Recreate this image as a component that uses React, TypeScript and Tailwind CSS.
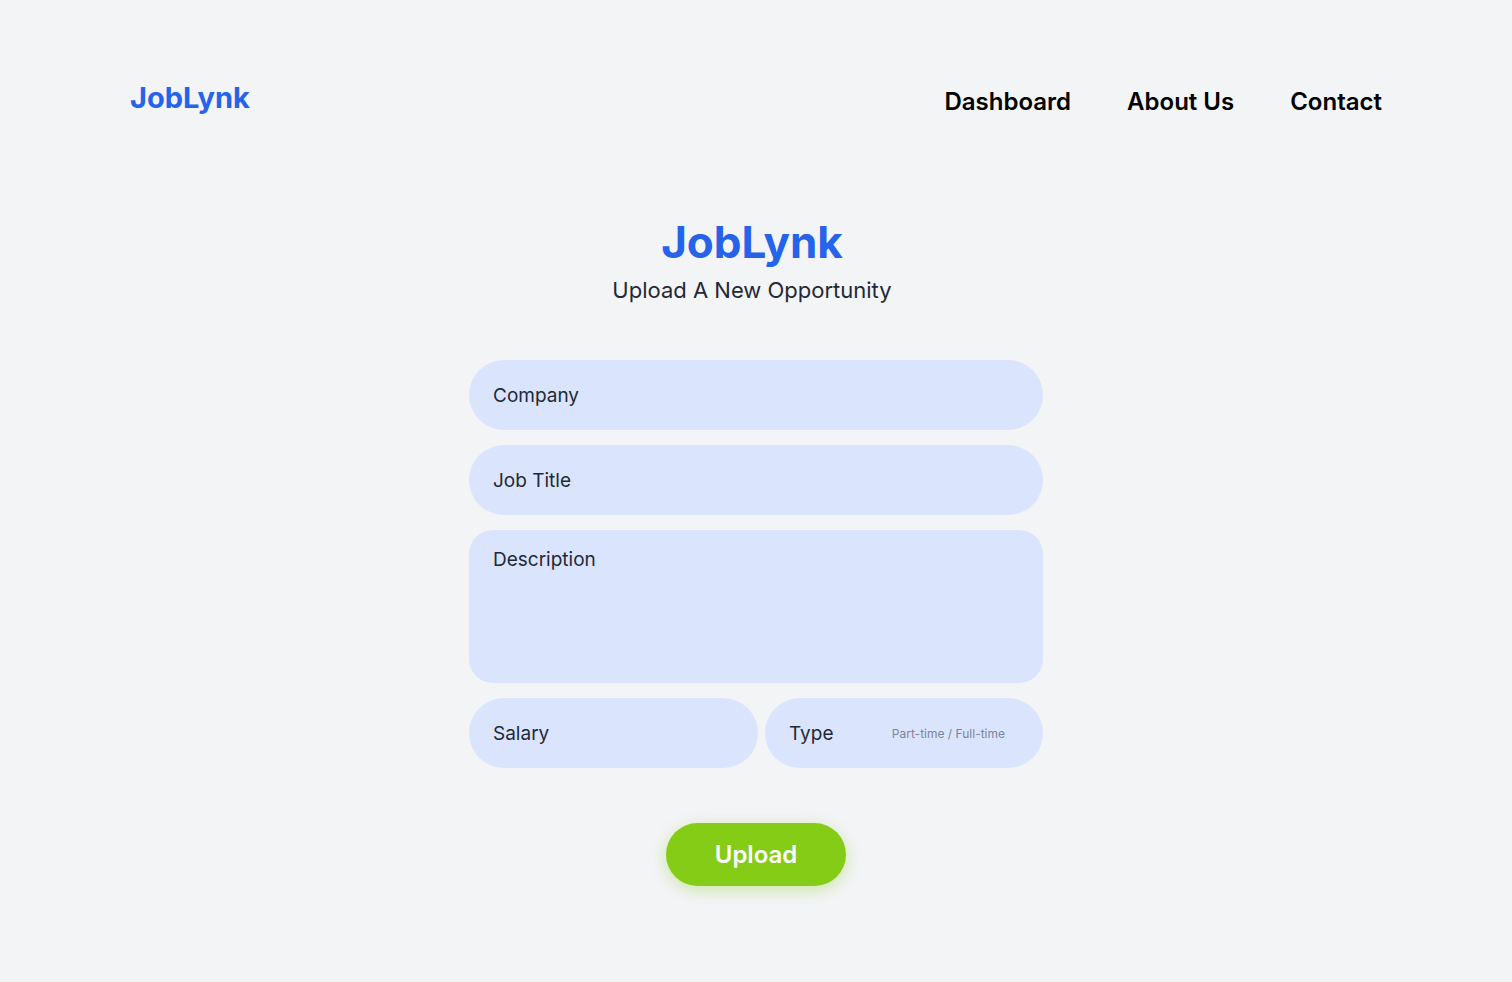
const fieldText = "shrink-0 text-[19px] leading-7 text-[#1f2937]";
const pill = "flex h-[70px] min-w-0 items-center gap-3 rounded-full bg-[#dae4fd] px-6 pt-[2px]";
const control = "min-w-0 flex-1 bg-transparent text-[19px] leading-7 text-[#1f2937] outline-none";

const links = [
  { label: "Dashboard", href: "#dashboard" },
  { label: "About Us", href: "#about" },
  { label: "Contact", href: "#contact" },
];

function Header() {
  return (
    <header className="flex items-start justify-between px-[130px] pt-20">
      <a href="#home" className="text-[29px] leading-9 font-bold text-[#2563eb]">
        JobLynk
      </a>
      <nav className="flex gap-14 pt-1">
        {links.map((link) => (
          <a key={link.href} href={link.href} className="text-[24px] leading-9 font-semibold text-black">
            {link.label}
          </a>
        ))}
      </nav>
    </header>
  );
}

function TextField({ id, label }: { id: string; label: string }) {
  return (
    <div className={pill}>
      <label htmlFor={id} className={fieldText}>
        {label}
      </label>
      <input id={id} name={id} type="text" className={control} />
    </div>
  );
}

export default function App() {
  return (
    <div className="min-h-screen bg-[#f3f4f6] pb-24 font-['Inter',sans-serif]">
      <Header />
      <main className="mx-auto flex w-full max-w-[574px] flex-col pt-24">
        <div className="pr-2 text-center">
          <h1 className="text-[44px] leading-[52px] font-bold text-[#2563eb]">JobLynk</h1>
          <p className="pt-1 text-[22px] leading-9 text-[#1f2937]">Upload A New Opportunity</p>
        </div>
        <form className="flex flex-col gap-[15px] pt-[52px]" onSubmit={(event) => event.preventDefault()}>
          <TextField id="company" label="Company" />
          <TextField id="job-title" label="Job Title" />
          <div className="flex h-[153px] items-start gap-3 rounded-3xl bg-[#dae4fd] px-6 py-4">
            <label htmlFor="description" className={fieldText}>
              Description
            </label>
            <textarea id="description" name="description" className={`${control} h-full resize-none`} />
          </div>
          <div className="grid grid-cols-[minmax(0,289fr)_minmax(0,278fr)] gap-[7px]">
            <TextField id="salary" label="Salary" />
            <div className={pill}>
              <label htmlFor="type" className={fieldText}>
                Type
              </label>
              <input
                id="type"
                name="type"
                type="text"
                placeholder="Part-time / Full-time"
                className="min-w-0 flex-1 bg-transparent pr-[14px] text-right text-[12px] leading-7 text-[#1f2937] outline-none placeholder:text-[#7c859b]"
              />
            </div>
          </div>
          <button
            type="submit"
            className="mt-10 h-[63px] w-[180px] self-center rounded-full bg-[#84cc16] text-[24px] leading-9 font-semibold text-white shadow-[0_4px_16px_rgba(132,204,22,0.35)]"
          >
            Upload
          </button>
        </form>
      </main>
    </div>
  );
}
